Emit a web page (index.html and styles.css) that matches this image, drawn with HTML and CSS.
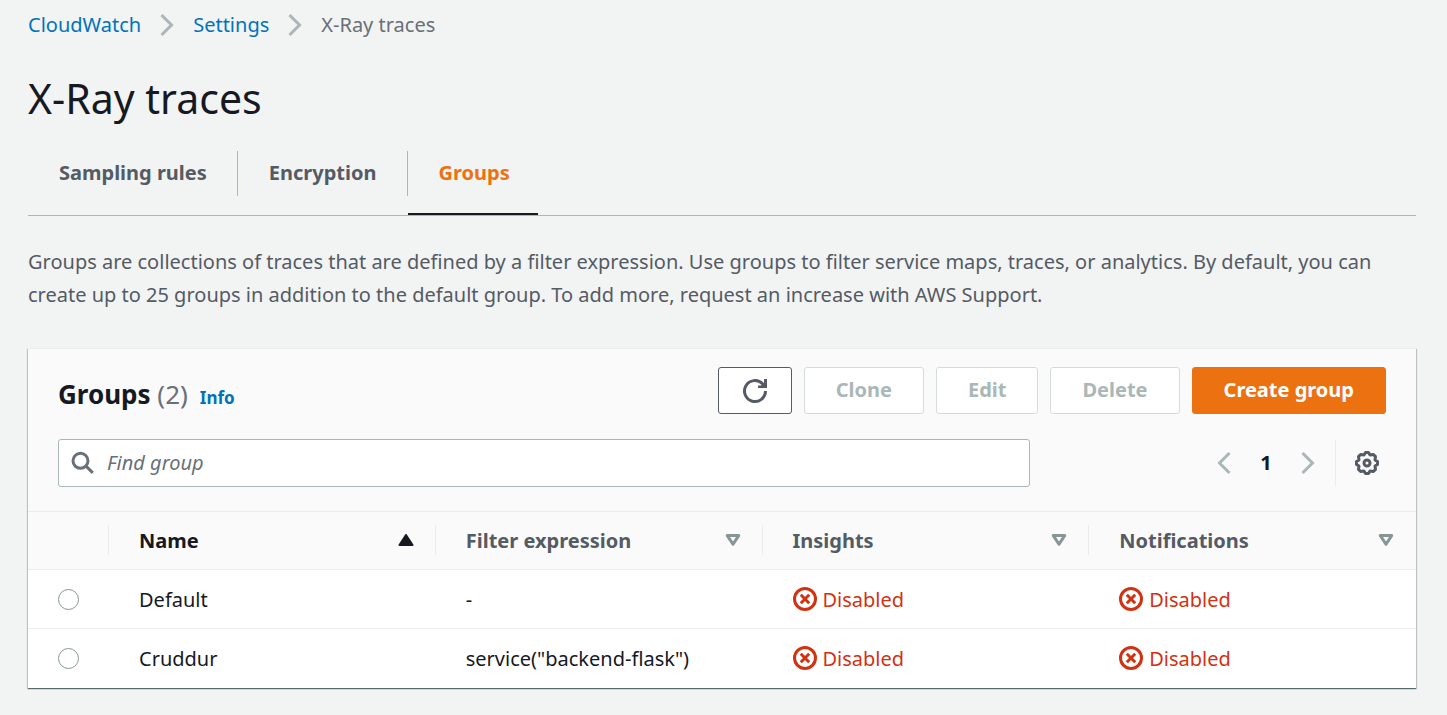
FILE: index.html
```html
<!DOCTYPE html>
<html lang="en">
<head>
<meta charset="utf-8">
<title>X-Ray traces</title>
<meta name="viewport" content="width=device-width, initial-scale=1">
<link rel="stylesheet" href="styles.css">
</head>
<body>
<svg class="sprite" aria-hidden="true">
  <symbol id="chevron" viewBox="0 0 24 24"><path d="M6.500 2l10 10-10 10" fill="none" stroke="currentColor" stroke-width="3"/></symbol>
  <symbol id="sort" viewBox="0 0 16 12"><path d="M2.300 1.600h11.400L8 10.300z" fill="none" stroke="currentColor" stroke-width="3" stroke-linejoin="round"/></symbol>
  <symbol id="sorted" viewBox="0 0 16 12"><path d="M1.500 11h13L8 1z" fill="currentColor" stroke="currentColor" stroke-width="2" stroke-linejoin="round"/></symbol>
  <symbol id="error" viewBox="0 0 24 24"><g fill="none" stroke="currentColor" stroke-width="3"><circle cx="12" cy="12" r="10.500"/><path d="M7.800 7.800l8.400 8.400M16.200 7.800l-8.400 8.400"/></g></symbol>
</svg>
<main class="page">
  <nav class="breadcrumbs" aria-label="Breadcrumbs">
    <a href="#">CloudWatch</a>
    <svg class="icon muted"><use href="#chevron"/></svg>
    <a href="#">Settings</a>
    <svg class="icon muted"><use href="#chevron"/></svg>
    <span>X-Ray traces</span>
  </nav>
  <h1 class="title">X-Ray traces</h1>
  <div class="tabs" role="tablist">
    <button class="tab" role="tab" aria-selected="false"><span>Sampling rules</span></button>
    <button class="tab" role="tab" aria-selected="false"><span>Encryption</span></button>
    <button class="tab active" role="tab" aria-selected="true"><span>Groups</span></button>
  </div>
  <p class="description">Groups are collections of traces that are defined by a filter expression. Use groups to filter service maps, traces, or analytics. By default, you can create up to 25 groups in addition to the default group. To add more, request an increase with AWS Support.</p>
  <section class="panel">
    <header class="panel-header">
      <div class="heading-row">
        <div class="heading">
          <h2>Groups <span class="count">(2)</span></h2>
          <a class="info" href="#">Info</a>
        </div>
        <div class="actions">
          <button class="button refresh" aria-label="Refresh">
            <svg class="refresh-icon" viewBox="0 0 26 26"><path d="M23.500 13A10.500 10.500 0 1 1 20.500 5.700L22.500 8" fill="none" stroke="currentColor" stroke-width="3"/><path d="M25 1v9h-9V7.500h3L22 5V1z" fill="currentColor"/></svg>
          </button>
          <button class="button" disabled>Clone</button>
          <button class="button" disabled>Edit</button>
          <button class="button" disabled>Delete</button>
          <button class="button primary">Create group</button>
        </div>
      </div>
      <div class="filter-row">
        <label class="search">
          <svg class="icon" viewBox="0 0 24 24"><g fill="none" stroke="currentColor" stroke-width="3"><circle cx="9.500" cy="9.800" r="7.500"/><path d="M15 15.200l6.800 6.600"/></g></svg>
          <input type="search" placeholder="Find group" aria-label="Find group">
        </label>
        <div class="tools">
          <button class="icon-button" aria-label="Previous page"><svg class="icon flip"><use href="#chevron"/></svg></button>
          <button class="page-number" aria-current="page">1</button>
          <button class="icon-button" aria-label="Next page"><svg class="icon"><use href="#chevron"/></svg></button>
          <button class="preferences" aria-label="Preferences">
            <svg class="icon" viewBox="-12 -12 24 24"><g fill="none" stroke="currentColor" stroke-width="3" stroke-linejoin="round"><path d="M10.500-1.500V1.500L8 3L8.500 6.400L6.400 8.500L3 8L1.500 10.500H-1.500L-3 8L-6.400 8.500L-8.500 6.400L-8 3L-10.500 1.500V-1.500L-8-3L-8.500-6.400L-6.400-8.500L-3-8L-1.500-10.500H1.500L3-8L6.400-8.500L8.500-6.400L8-3Z"/><circle r="3"/></g></svg>
          </button>
        </div>
      </div>
    </header>
    <table class="groups">
      <colgroup><col class="select-col"><col><col><col><col></colgroup>
      <thead>
        <tr>
          <th><div class="head-cell"></div></th>
          <th class="sorted"><div class="head-cell">Name<svg class="sort-icon"><use href="#sorted"/></svg></div></th>
          <th><div class="head-cell">Filter expression<svg class="sort-icon"><use href="#sort"/></svg></div></th>
          <th><div class="head-cell">Insights<svg class="sort-icon"><use href="#sort"/></svg></div></th>
          <th><div class="head-cell">Notifications<svg class="sort-icon"><use href="#sort"/></svg></div></th>
        </tr>
      </thead>
      <tbody>
        <tr>
          <td><input class="radio" type="radio" name="group" aria-label="Default"></td>
          <td>Default</td>
          <td>-</td>
          <td><span class="status"><svg class="icon"><use href="#error"/></svg>Disabled</span></td>
          <td><span class="status"><svg class="icon"><use href="#error"/></svg>Disabled</span></td>
        </tr>
        <tr>
          <td><input class="radio" type="radio" name="group" aria-label="Cruddur"></td>
          <td>Cruddur</td>
          <td>service("backend-flask")</td>
          <td><span class="status"><svg class="icon"><use href="#error"/></svg>Disabled</span></td>
          <td><span class="status"><svg class="icon"><use href="#error"/></svg>Disabled</span></td>
        </tr>
      </tbody>
    </table>
  </section>
</main>
</body>
</html>
```
FILE: styles.css
```css
* {
  box-sizing: border-box;
}

body {
  margin: 0;
  background: #f2f3f3;
  color: #16191f;
  font-family: "Noto Sans", "Open Sans", sans-serif;
  font-size: 20px;
  line-height: 33px;
}

button,
input {
  margin: 0;
  font: inherit;
  color: inherit;
}

button {
  padding: 0;
  border: 0;
  background: none;
}

a {
  color: #0073bb;
  text-decoration: none;
}

.sprite {
  position: absolute;
  width: 0;
  height: 0;
}

.icon {
  flex: none;
  width: 24px;
  height: 24px;
}

.muted {
  color: #aab7b8;
}

.flip {
  transform: scaleX(-1);
}

.page {
  padding: 8px 31px 26px 28px;
}

.breadcrumbs {
  display: flex;
  align-items: center;
  gap: 14px;
  color: #687078;
}

.title {
  margin: 29px 0 25px;
  font-size: 41px;
  font-weight: 400;
  line-height: 56px;
}

.tabs {
  display: flex;
  border-bottom: 1px solid #aab7b8;
}

.tab {
  padding-bottom: 19px;
  color: #545b64;
  font-weight: 700;
}

.tab span {
  display: block;
  padding: 5px 30px 7px 31px;
  border-right: 1px solid #aab7b8;
}

.tab.active {
  padding-bottom: 17px;
  border-bottom: 2px solid #16191f;
  color: #ec7211;
}

.tab.active span {
  padding-right: 27px;
  border-color: transparent;
}

.description {
  margin: 29px 0 37px;
  color: #545b64;
}

.panel {
  background: #fff;
  border-top: 1px solid #eaeded;
  box-shadow: 0 1px 1px #001c2480, 1px 1px 1px #001c2426, -1px 1px 1px #001c2426;
}

.panel-header {
  padding: 18px 30px 24px;
  background: #fafafa;
}

.heading-row,
.filter-row {
  display: flex;
  align-items: center;
  justify-content: space-between;
}

.heading {
  display: flex;
  align-items: baseline;
  gap: 12px;
  padding-top: 6px;
}

h2 {
  margin: 0;
  font-size: 26px;
  font-weight: 700;
  line-height: 40px;
}

.count {
  color: #687078;
  font-weight: 400;
}

.info {
  font-size: 17px;
  font-weight: 700;
}

.actions {
  display: flex;
  gap: 12px;
}

.button {
  height: 47px;
  padding: 0 31px 2px;
  border: 1px solid #545b64;
  border-radius: 3px;
  background: #fff;
  color: #545b64;
  font-weight: 700;
}

.button:disabled {
  border-color: #d5dbdb;
  color: #aab7b8;
}

.button.primary {
  border-color: #ec7211;
  background: #ec7211;
  color: #fff;
}

.button.refresh {
  display: flex;
  align-items: center;
  padding: 0 23px;
}

.refresh-icon {
  width: 26px;
  height: 26px;
}

.filter-row {
  margin-top: 25px;
}

.search {
  display: flex;
  flex: 0 1 972px;
  align-items: center;
  gap: 12px;
  height: 48px;
  padding: 0 12px;
  border: 1px solid #aab7b8;
  border-radius: 3px;
  background: #fff;
  color: #687078;
}

.search input {
  flex: 1;
  min-width: 0;
  padding: 0 0 2px;
  border: 0;
  outline: 0;
  background: none;
}

.search input::placeholder {
  color: #687078;
  font-style: italic;
  opacity: 1;
}

.tools {
  display: flex;
  align-items: center;
}

.icon-button,
.preferences {
  display: flex;
  color: #aab7b8;
}

.page-number {
  width: 60px;
  padding-bottom: 2px;
  font-weight: 700;
}

.preferences {
  align-items: center;
  height: 47px;
  margin-left: 15px;
  padding: 0 7px 0 19px;
  border-left: 1px solid #eaeded;
  color: #545b64;
}

.groups {
  width: 100%;
  border-collapse: collapse;
  table-layout: fixed;
}

.select-col {
  width: 81px;
}

th,
td {
  text-align: left;
}

th {
  padding: 13px 0 14px;
  border-top: 1px solid #eaeded;
  background: #fafafa;
  color: #545b64;
}

.sorted {
  color: #16191f;
}

.head-cell {
  display: flex;
  align-items: center;
  justify-content: space-between;
  height: 30px;
  padding: 0 21px 0 30px;
  border-right: 1px solid #eaeded;
}

th:last-child .head-cell {
  border-right-color: transparent;
}

.sort-icon {
  flex: none;
  width: 16px;
  height: 12px;
  color: #879596;
}

.sorted .sort-icon {
  color: #16191f;
}

td {
  height: 59px;
  padding: 0 0 0 30px;
  border-top: 1px solid #eaeded;
}

.radio {
  display: block;
  appearance: none;
  width: 21px;
  height: 21px;
  border: 1px solid #879596;
  border-radius: 50%;
  background: #fff;
}

.radio:checked {
  border: 6px solid #0073bb;
}

.status {
  display: flex;
  align-items: center;
  gap: 6px;
  color: #d13212;
}
```
